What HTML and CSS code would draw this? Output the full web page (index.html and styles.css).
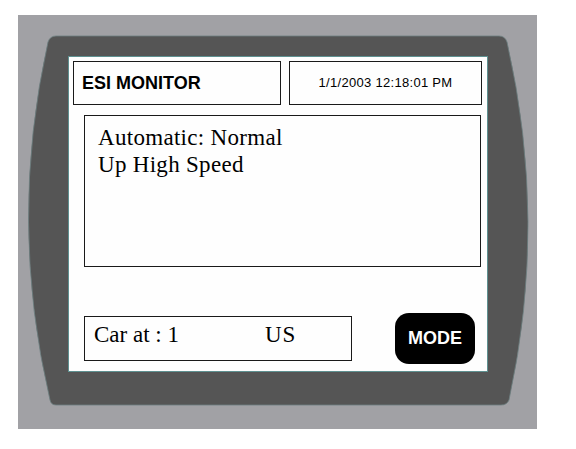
FILE: index.html
```html
<!DOCTYPE html>
<html>
<head>
<meta charset="utf-8">
<link rel="stylesheet" href="styles.css">
</head>
<body>
<div class="panel">
  <svg class="device" viewBox="18 15 519 414" width="519" height="414" aria-hidden="true">
    <path d="M56,36 L499,36 Q505,36 507,42 Q548,222 509,400 Q507,405 501,405 L56,405 Q51,405 50,400 Q8,222 48,42 Q50,36 56,36 Z" fill="#555555" stroke="#6c7f80" stroke-width="0.8"/>
  </svg>
  <div class="screen">
    <div class="header">
      <div class="title">ESI MONITOR</div>
      <div class="date">1/1/2003 12:18:01 PM</div>
    </div>
    <div class="main">
      <div class="line">Automatic: Normal</div>
      <div class="line">Up High Speed</div>
    </div>
    <div class="footer">
      <div class="car"><span class="car-label">Car at : 1</span><span class="dir">US</span></div>
      <div class="mode">MODE</div>
    </div>
  </div>
</div>
</body>
</html>
```
FILE: styles.css
```css
html, body {
  margin: 0;
  padding: 0;
  background: #ffffff;
}
.panel {
  position: relative;
  box-sizing: border-box;
  width: 519px;
  height: 414px;
  margin: 15px 0 0 18px;
  padding: 41px 0 0 50px;
  background: #a1a1a5;
}
.device {
  position: absolute;
  left: 0;
  top: 0;
}
.screen {
  position: relative;
  box-sizing: border-box;
  width: 420px;
  height: 316px;
  border: 1px solid #5f9191;
  background: #fefefe;
  padding: 4px 5px 0 4px;
}
.header {
  display: flex;
  gap: 8px;
  height: 44px;
}
.title, .date {
  box-sizing: border-box;
  height: 44px;
  border: 1px solid #1a1a1a;
  font-family: "Liberation Sans", Arial, sans-serif;
  color: #000;
  line-height: 42px;
}
.title {
  width: 208px;
  padding-left: 8px;
  font-size: 18px;
  font-weight: bold;
}
.date {
  width: 193px;
  text-align: center;
  font-size: 13px;
  letter-spacing: 0.3px;
}
.main {
  box-sizing: border-box;
  width: 397px;
  height: 152px;
  margin: 10px 0 0 11px;
  border: 1px solid #1a1a1a;
  padding: 8px 0 0 13px;
  font-family: "Liberation Serif", "Times New Roman", serif;
  font-size: 23px;
  line-height: 27px;
  letter-spacing: 0.3px;
  color: #000;
}
.footer {
  display: flex;
  align-items: center;
  height: 51px;
  margin-top: 46px;
}
.car {
  box-sizing: border-box;
  display: flex;
  width: 268px;
  height: 45px;
  margin-left: 11px;
  border: 1px solid #1a1a1a;
  padding: 4px 0 0 9px;
  font-family: "Liberation Serif", "Times New Roman", serif;
  font-size: 23px;
  line-height: 27px;
  color: #000;
}
.car-label {
  width: 171px;
}
.dir {
  letter-spacing: 0.8px;
}
.mode {
  display: flex;
  align-items: center;
  justify-content: center;
  width: 80px;
  height: 51px;
  margin-left: 43px;
  border-radius: 14px;
  background: #000;
  color: #fff;
  font-family: "Liberation Sans", Arial, sans-serif;
  font-weight: bold;
  font-size: 18px;
}
```
